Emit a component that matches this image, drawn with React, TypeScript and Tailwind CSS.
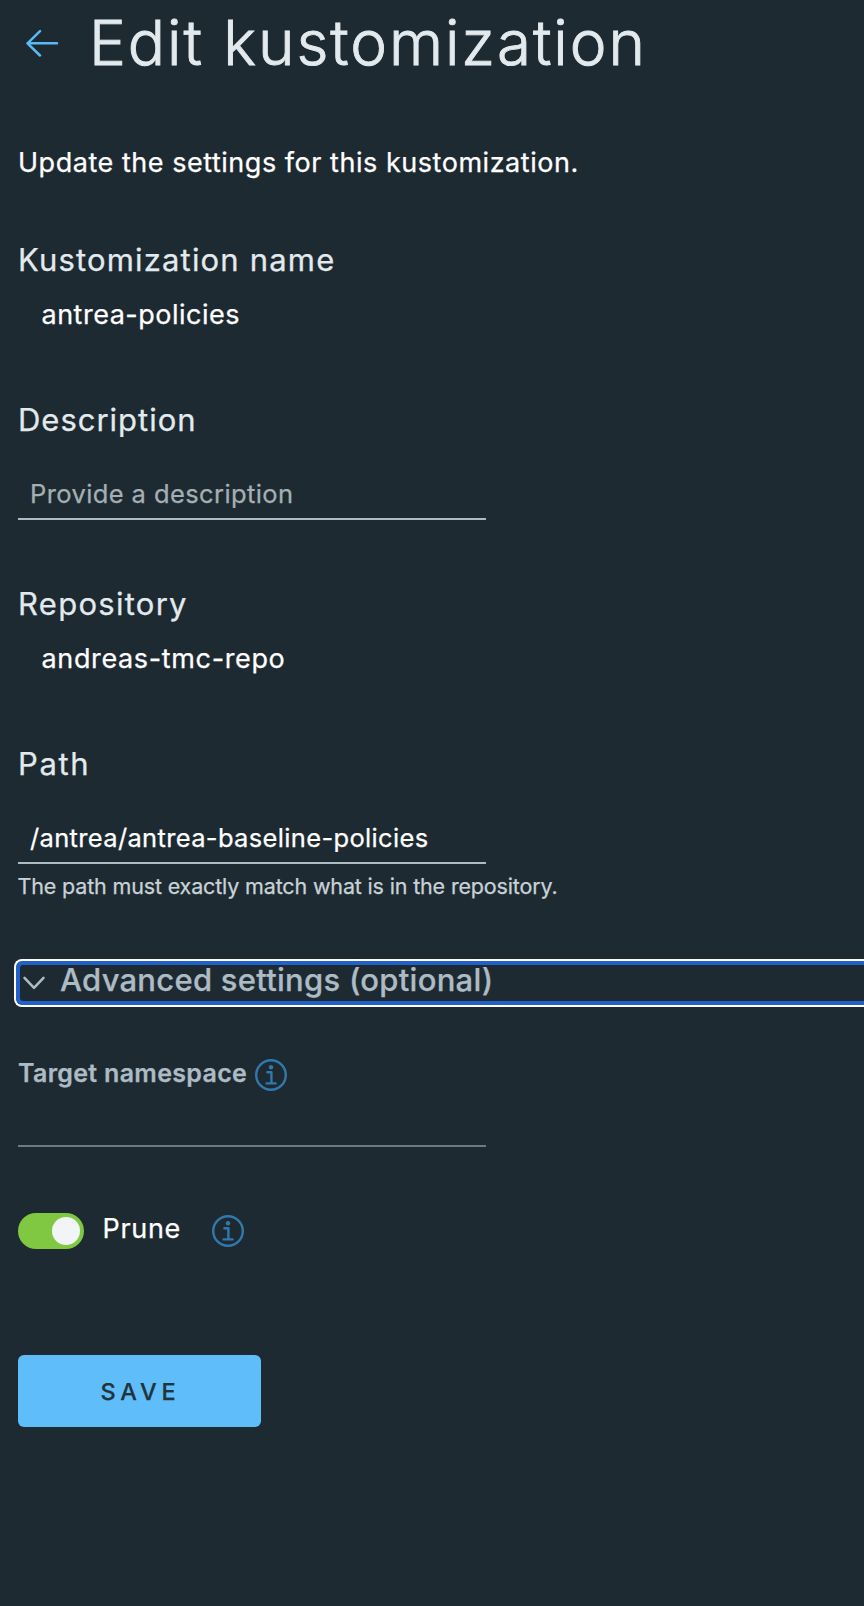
import React from "react";

function InfoIcon() {
  return (
    <svg className="size-8 shrink-0" viewBox="0 0 32 32" fill="none" stroke="#3079ad" role="img" aria-label="Info">
      <circle cx="16" cy="16" r="14.8" strokeWidth="2.4" />
      <circle cx="16" cy="8.2" r="2.2" fill="#3079ad" stroke="none" />
      <path d="M12.4 13.2h4v11M11.6 24.4h9" strokeWidth="2.4" strokeLinecap="round" strokeLinejoin="round" />
    </svg>
  );
}

function Label({ spacing, children }: { spacing: string; children: React.ReactNode }) {
  return <h2 className={`h-10 pl-[18px] text-[31px] leading-10 text-[#e3eaee] ${spacing}`}>{children}</h2>;
}

export default function App() {
  return (
    <main className="h-[1606px] w-full overflow-hidden bg-[#1e2a32] font-['Inter','Liberation_Sans',sans-serif] font-normal text-white [-webkit-text-stroke:0.25px]">
      <header className="flex h-[85px] items-center">
        <svg className="ml-[26px] h-[28px] w-[34px] shrink-0" viewBox="0 0 34 28" fill="none" stroke="#5abaf6" strokeWidth="2.5" strokeLinecap="round" strokeLinejoin="round">
          <path d="M31 14.3H1.5M14 2.2 1.5 14.3 14 26.5" />
        </svg>
        <h1 className="ml-[29px] pt-px text-[62px] leading-[84px] font-light tracking-[1.93px] whitespace-nowrap text-[#e3eaee] [-webkit-text-stroke:0.9px]">Edit kustomization</h1>
      </header>

      <p className="mt-[62px] h-8 pl-[18px] text-[27px] leading-8 tracking-[0.53px]">Update the settings for this kustomization.</p>

      <section className="mt-[61px]">
        <Label spacing="tracking-[1.17px]">Kustomization name</Label>
        <p className="mt-[17px] h-9 pl-[41.5px] text-[27px] leading-9 tracking-[0.5px]">antrea-policies</p>
      </section>

      <section className="mt-[67px]">
        <Label spacing="tracking-[0.98px]">Description</Label>
        <input
          className="mt-[34px] ml-[18px] block h-[46px] w-[468px] border-b-2 border-[#adbbc4] bg-transparent pb-[6px] pl-3 text-[25.5px] leading-[38px] tracking-[0.4px] outline-none placeholder:text-[#a5afb3]"
          placeholder="Provide a description"
        />
      </section>

      <section className="mt-16">
        <Label spacing="tracking-[1.28px]">Repository</Label>
        <p className="mt-[17px] h-9 pl-[41.5px] text-[27px] leading-9 tracking-[0.64px]">andreas-tmc-repo</p>
      </section>

      <section className="mt-[67px]">
        <Label spacing="tracking-[1.6px]">Path</Label>
        <input
          className="mt-[34px] ml-[18px] block h-[46px] w-[468px] border-b-2 border-[#adbbc4] bg-transparent pb-[6px] pl-3 text-[25.5px] leading-[38px] tracking-[0.34px] outline-none"
          defaultValue="/antrea/antrea-baseline-policies"
        />
        <p className="mt-2 h-7 pl-[17.5px] text-[21.5px] leading-7 tracking-[-0.157px] text-[#c8d2d6]">
          The path must exactly match what is in the repository.
        </p>
      </section>

      <div className="mt-[59px] ml-[14px] h-12 overflow-hidden rounded-l-[8px] border-y-2 border-l-2 border-white bg-[#2260ca]">
        <button className="flex h-full w-full items-center rounded-l-[7px] border-y-4 border-l-4 border-[#2260ca] bg-[#1e2a32] text-left">
          <svg className="ml-[3px] h-[14px] w-[22px] shrink-0" viewBox="0 0 22 14" fill="none" stroke="#adbbc4" strokeWidth="2.5" strokeLinecap="round" strokeLinejoin="round">
            <path d="M1.5 1.8 11 11.8 20.5 1.8" />
          </svg>
          <span className="ml-[15px] pb-[6px] text-[31px] leading-[30px] font-medium tracking-[0.26px] whitespace-nowrap text-[#adbbc4]">
            Advanced settings (optional)
          </span>
        </button>
      </div>

      <section className="mt-[46px] ml-[18px]">
        <div className="flex h-10 items-center">
          <label htmlFor="namespace" className="w-[237px] text-[25px] leading-10 font-semibold tracking-[0.308px] whitespace-nowrap text-[#adbbc4]">
            Target namespace
          </label>
          <span className="pt-1">
            <InfoIcon />
          </span>
        </div>
        <input id="namespace" className="mt-2 block h-[46px] w-[468px] border-b-2 border-[#6b7b84] bg-transparent outline-none" />
      </section>

      <div className="mt-[66px] ml-[18px] flex h-9 items-center">
        <button role="switch" aria-checked="true" aria-label="Prune" className="flex h-9 w-[66px] items-center justify-end rounded-full bg-[#80c842] pr-1">
          <span className="size-7 rounded-full bg-[#f1f5f8]" />
        </button>
        <span className="ml-[18.5px] w-[109.5px] pb-1 text-[27px] leading-[30px] tracking-[0.67px]">Prune</span>
        <InfoIcon />
      </div>

      <button className="mt-[106px] ml-[18px] flex h-[72px] w-[243px] items-center justify-center rounded-[6px] bg-[#5fbefa] pt-px text-[23.5px] font-medium tracking-[4.8px] text-[#21333b]">
        <span className="-mr-[2px]">SAVE</span>
      </button>
    </main>
  );
}
